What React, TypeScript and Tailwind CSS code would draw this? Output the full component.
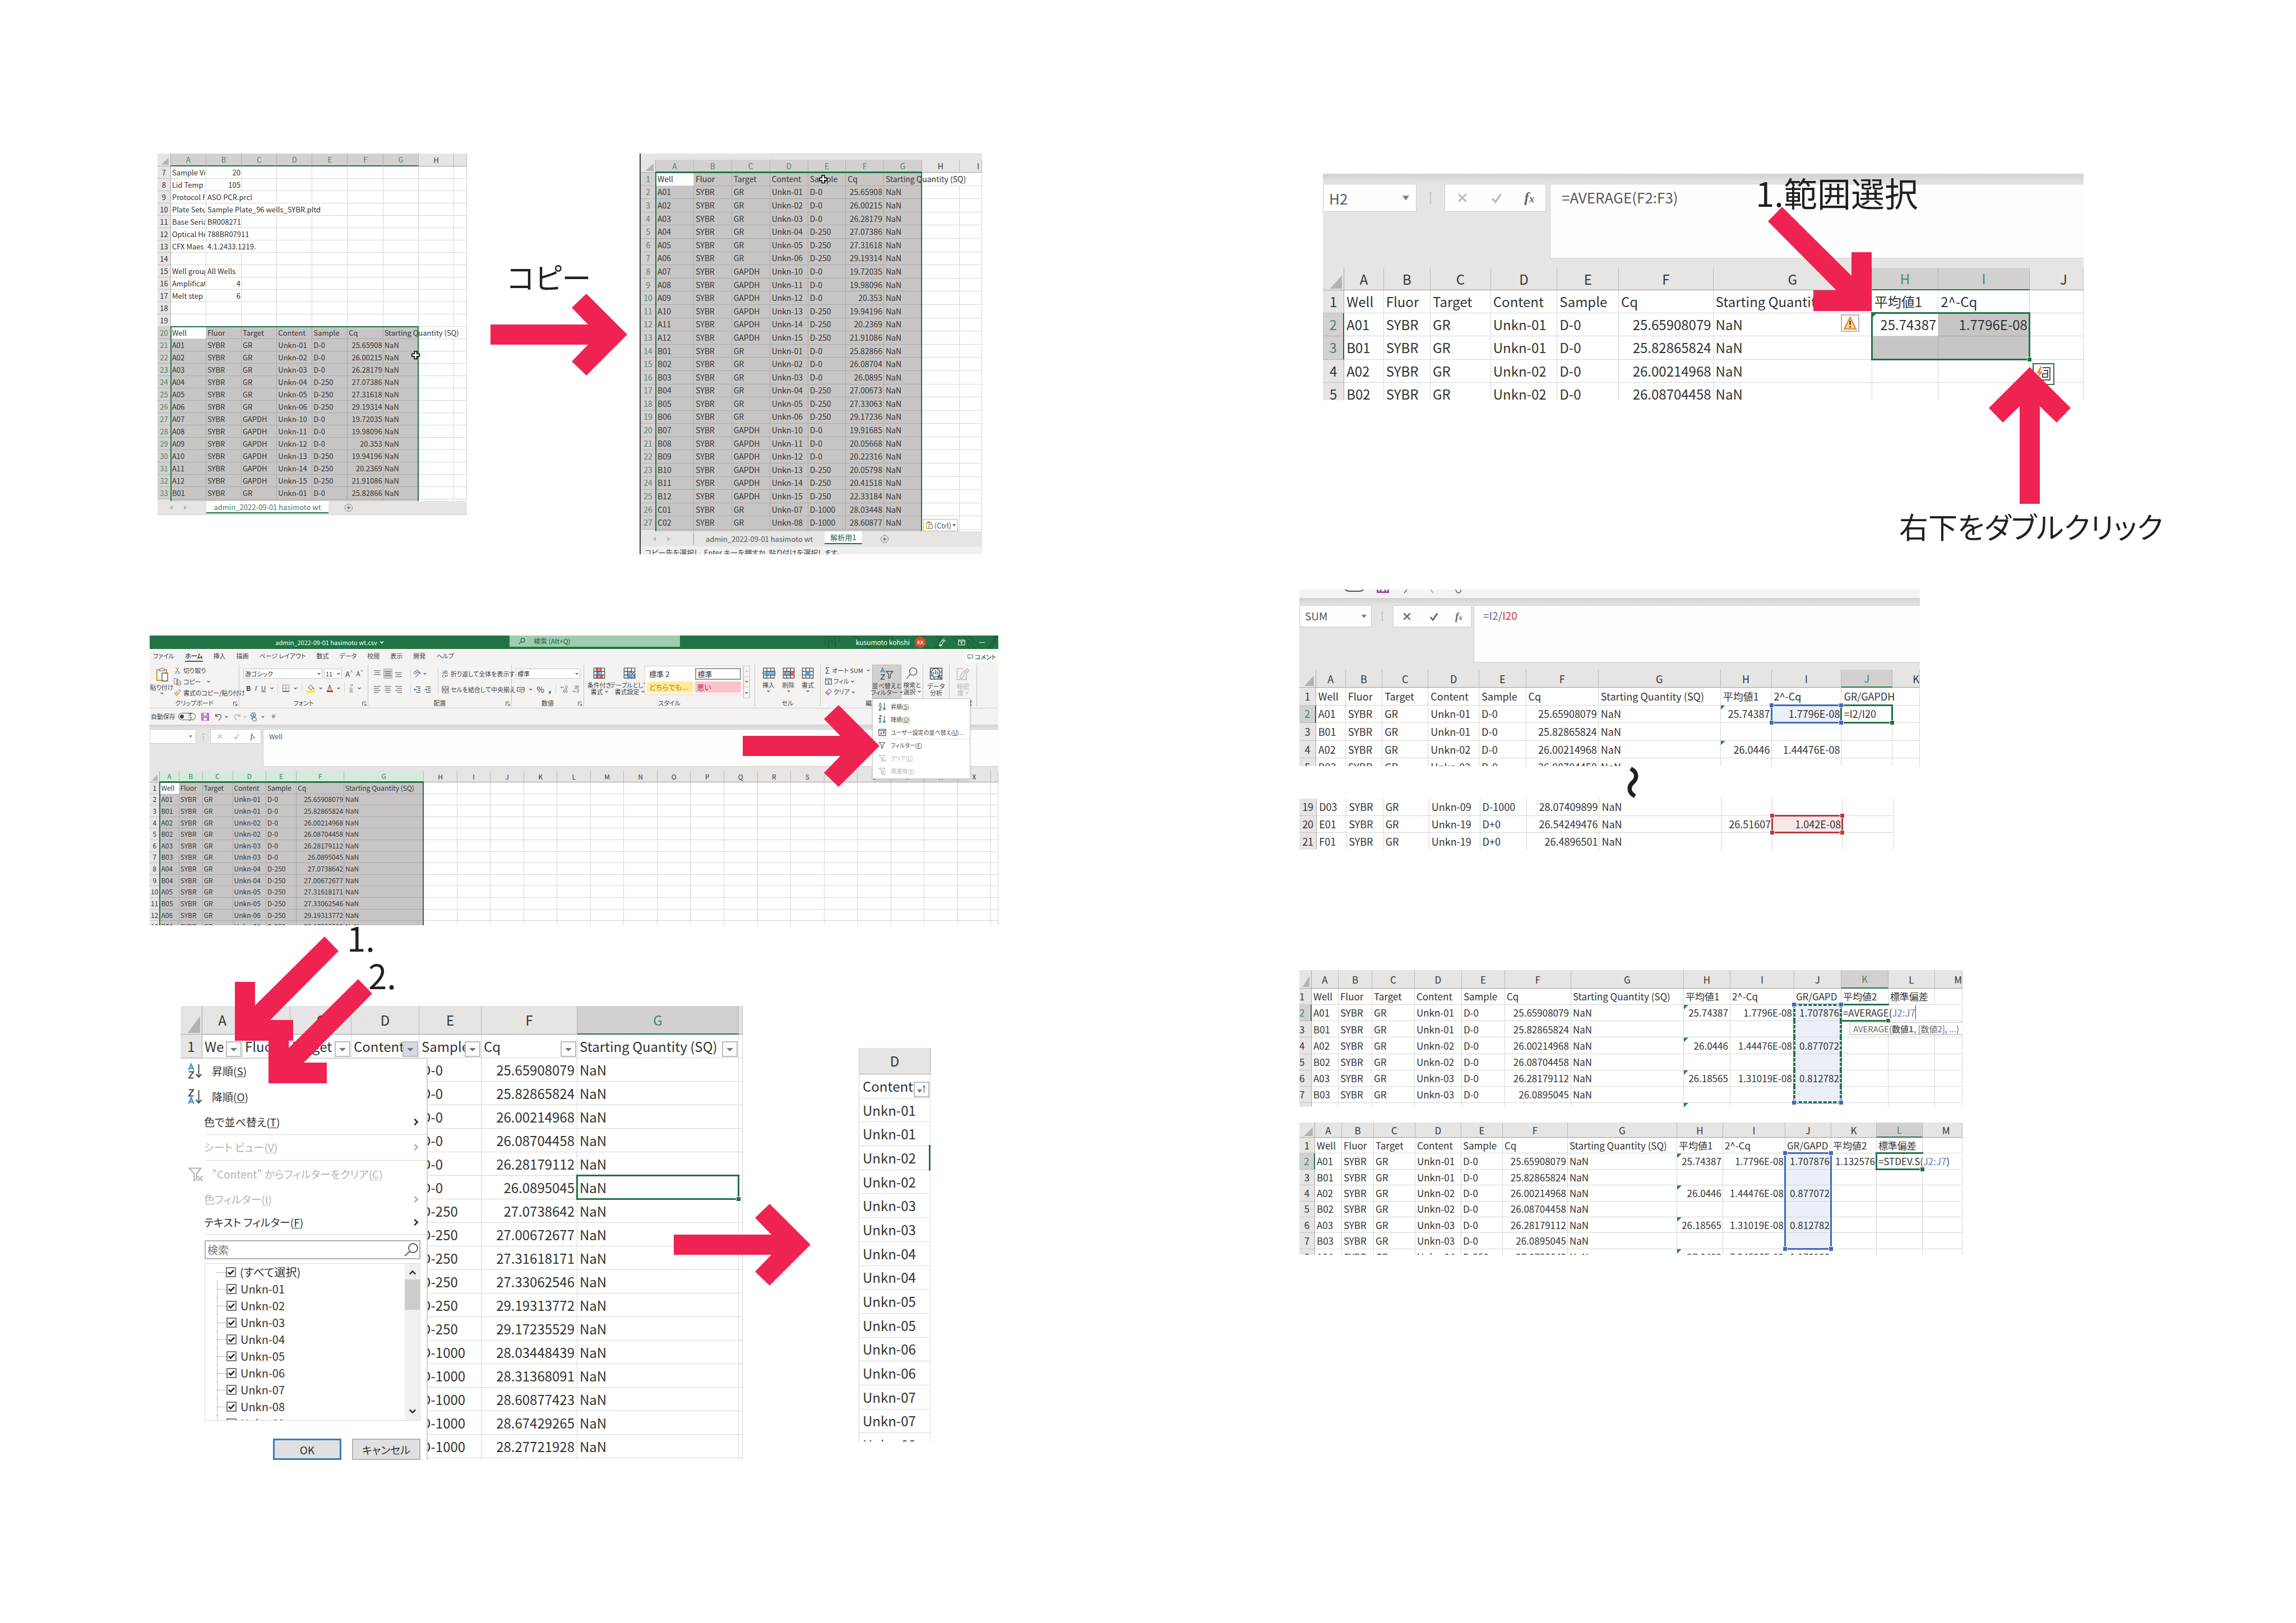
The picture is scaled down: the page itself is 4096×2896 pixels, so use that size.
import type { ReactNode } from 'react';
import clsx from 'clsx';
import { twMerge } from 'tailwind-merge';

/* ---------- shared pieces ---------- */

type CellSpec = { text?: ReactNode; spill?: number; className?: string; extra?: ReactNode };
type Cell = string | CellSpec;
type Row = { n: string; cells: Cell[] };
type Column = [label: string, weight: number, headClass?: string];
type Range = {
  from: [number, number];
  to: [number, number];
  edge?: string;
  thin?: boolean;
  fill?: string;
  handle?: string;
  corners?: boolean;
  skip?: [number, number];
};

const GREEN = 'border-[#217346]';

function Triangle() {
  return (
    <span className="absolute bottom-[2px] right-[3px] h-[60%] w-[58%] bg-[#b4b3b2] [clip-path:polygon(100%_0,100%_100%,0_100%)]" />
  );
}

const hasText = (cell?: Cell) => (typeof cell === 'string' ? cell !== '' : Boolean(cell?.text || cell?.extra));

function Sheet({
  corner,
  cols,
  rows,
  box,
  table,
  head,
  text,
  pad,
  activeCols = [],
  activeRows = [],
  activeHead = 'bg-[#d2d1d0] text-[#4c8467]',
  rowHead = 'text-center',
  rowMark = false,
  ranges = [],
  noHead = false,
}: {
  corner: number;
  cols: Column[];
  rows: Row[];
  box: string;
  table: string;
  head?: string;
  text: string;
  pad: string;
  activeCols?: string[];
  activeRows?: string[];
  activeHead?: string;
  rowHead?: string;
  rowMark?: boolean;
  ranges?: Range[];
  noHead?: boolean;
}) {
  const total = cols.reduce((sum, c) => sum + c[1], corner);
  const share = (w: number) => ({ width: `${(w / total) * 100}%` });
  return (
    <div className={clsx('isolate overflow-hidden bg-white', box)}>
      <table className={clsx('w-full table-fixed border-separate border-spacing-0 leading-none text-[#333]', table, text)}>
        <colgroup>
          <col style={share(corner)} />
          {cols.map((c, i) => (
            <col key={i} style={share(c[1])} />
          ))}
        </colgroup>
        {!noHead && (
          <thead>
            <tr className={head}>
              <th className="relative border-b border-r border-[#a8a7a6] bg-[#e6e5e4]">
                <Triangle />
              </th>
              {cols.map(([label, , headClass], i) => {
                const on = activeCols.includes(label);
                return (
                  <th
                    key={i}
                    scope="col"
                    className={clsx(
                      'border-b border-r p-0 font-normal',
                      headClass,
                      on ? clsx(activeHead, 'border-r-[#b4b3b2] border-b-2 border-b-[#217346]') : 'border-b-[#9c9b9a] border-r-[#b9b8b7] bg-[#e6e5e4]',
                    )}
                  >
                    {label}
                  </th>
                );
              })}
            </tr>
          </thead>
        )}
        <tbody>
          {rows.map((row, r) => {
            const open = new Set<number>();
            row.cells.forEach((c, i) => {
              if (typeof c !== 'string' && c.spill) for (let k = 0; k < c.spill; k++) open.add(i + k);
            });
            const on = activeRows.includes(row.n);
            return (
              <tr key={row.n}>
                <th
                  scope="row"
                  className={clsx(
                    'border-b border-r p-0 font-normal',
                    rowHead,
                    on ? clsx(activeHead, 'border-b-[#b4b3b2]') : 'border-b-[#c4c3c2] bg-[#e6e5e4]',
                    on && rowMark ? 'border-r-2 border-r-[#217346]' : 'border-r-[#a8a7a6]',
                  )}
                >
                  <div className="leading-normal">{row.n || '\u00a0'}</div>
                </th>
                {cols.map((_, c) => {
                  const raw = row.cells[c] ?? '';
                  const cell: CellSpec = typeof raw === 'string' ? { text: raw } : raw;
                  const hits = ranges.filter((g) => c >= g.from[0] && c <= g.to[0] && r >= g.from[1] && r <= g.to[1]);
                  const fill = hits.find((g) => g.fill && !(g.skip && g.skip[0] === c && g.skip[1] === r));
                  const right = typeof cell.text === 'string' && /^\d+(\.\d+)?(E-\d+)?$/.test(cell.text);
                  const clip = !right && !cell.spill && (hasText(row.cells[c + 1]) || Boolean(cell.extra));
                  return (
                    <td
                      key={c}
                      className={clsx(
                        'relative border-b border-r py-0',
                        pad,
                        fill ? fill.fill : 'border-[#d6d6d6]',
                        open.has(c) && 'border-r-transparent',
                        right ? 'text-right' : 'text-left',
                        cell.className,
                      )}
                    >
                      {cell.text && (
                        <div
                          className={clsx(
                            'whitespace-nowrap leading-normal',
                            cell.spill && 'relative z-[5]',
                            clip && 'overflow-x-clip',
                            right && 'flex justify-end',
                          )}
                        >
                          {cell.text}
                        </div>
                      )}
                      {cell.extra}
                      {hits
                        .filter((g) => g.edge)
                        .map((g, k) => (
                          <span
                            key={k}
                            className={twMerge(
                              'pointer-events-none absolute -inset-[2px] z-10',
                              g.thin && '-inset-px',
                              r === g.from[1] && (g.thin ? 'border-t-2' : 'border-t-[3px]'),
                              r === g.to[1] && (g.thin ? 'border-b-2' : 'border-b-[3px]'),
                              c === g.from[0] && (g.thin ? 'border-l-2' : 'border-l-[3px]'),
                              c === g.to[0] && (g.thin ? 'border-r-2' : 'border-r-[3px]'),
                              g.edge,
                            )}
                          />
                        ))}
                      {hits
                        .filter((g) => g.handle)
                        .map((g, k) => {
                          const T = r === g.from[1];
                          const B = r === g.to[1];
                          const L = c === g.from[0];
                          const R = c === g.to[0];
                          const base = clsx('absolute z-20 size-[9px] border border-white', g.handle);
                          return (
                            <span key={k}>
                              {g.corners && T && L && <i className={clsx(base, '-left-[5px] -top-[5px]')} />}
                              {g.corners && T && R && <i className={clsx(base, '-right-[5px] -top-[5px]')} />}
                              {g.corners && B && L && <i className={clsx(base, '-bottom-[5px] -left-[5px]')} />}
                              {B && R && <i className={clsx(base, '-bottom-[5px] -right-[5px]')} />}
                            </span>
                          );
                        })}
                    </td>
                  );
                })}
              </tr>
            );
          })}
        </tbody>
      </table>
    </div>
  );
}

function Arrow({ className, up = false }: { className?: string; up?: boolean }) {
  return up ? (
    <svg viewBox="0 0 146 244" className={clsx('h-[244px] w-[146px] fill-[#ef2352]', className)} aria-hidden="true">
      <polygon points="55,244 55,70 25,99 0,73 73,0 146,73 121,99 91,70 91,244" />
    </svg>
  ) : (
    <svg viewBox="0 0 244 146" className={clsx('h-[146px] w-[244px] fill-[#ef2352]', className)} aria-hidden="true">
      <polygon points="0,55 174,55 145,25 171,0 244,73 171,146 145,121 174,91 0,91" />
    </svg>
  );
}

function DiagonalArrow({ className, left = false }: { className?: string; left?: boolean }) {
  return (
    <svg viewBox="0 0 185 186" className={clsx('h-[186px] w-[185px] fill-[#ef2352]', className)} aria-hidden="true">
      {left ? (
        <polygon points="160,0 185,26 63,149 104,149 104,186 0,186 0,81 36,81 36,123" />
      ) : (
        <polygon points="25,0 0,26 122,149 81,149 81,186 185,186 185,81 149,81 149,123" />
      )}
    </svg>
  );
}

function Note({ children, className, small = false }: { children: ReactNode; className?: string; small?: boolean }) {
  return (
    <p className={clsx('whitespace-nowrap leading-[60px] text-[#231f20]', small ? 'text-[52px]' : 'text-[60px]', className)}>{children}</p>
  );
}

function Chevron({ className = 'size-[6px]' }: { className?: string }) {
  return (
    <svg viewBox="0 0 8 8" className={clsx('shrink-0 fill-none stroke-current', className)} strokeWidth="1.6" aria-hidden="true">
      <path d="M1 2.5 4 5.5 7 2.5" />
    </svg>
  );
}

function Cross({ className }: { className?: string }) {
  return (
    <svg viewBox="0 0 20 20" className={clsx('absolute z-20 size-[18px]', className)} aria-hidden="true">
      <path d="M7 2h5v5h5v5h-5v5H7v-5H2V7h5z" fill="#fff" stroke="#111" strokeWidth="2" />
    </svg>
  );
}

function ErrorFlag() {
  return <span className="absolute left-0 top-0 size-[8px] bg-[#1d8745] [clip-path:polygon(0_0,100%_0,0_100%)]" />;
}

function PlusTab() {
  return (
    <button type="button" aria-label="新しいシート" className="flex items-center">
      <svg viewBox="0 0 16 16" className="size-[16px] fill-none stroke-[#777]" aria-hidden="true">
        <circle cx="8" cy="8" r="6.5" />
        <path d="M8 5v6M5 8h6" strokeWidth="1.8" />
      </svg>
    </button>
  );
}

function TabArrows() {
  return (
    <div className="flex w-[87px] shrink-0 items-center gap-[20px] pl-[21px]">
      <button type="button" aria-label="前のシート">
        <svg viewBox="0 0 6 8" className="h-[8px] w-[6px] fill-[#b9b8b7]" aria-hidden="true"><path d="M6 0v8L0 4z" /></svg>
      </button>
      <button type="button" aria-label="次のシート">
        <svg viewBox="0 0 6 8" className="h-[8px] w-[6px] fill-[#b9b8b7]" aria-hidden="true"><path d="M0 0v8l6-4z" /></svg>
      </button>
    </div>
  );
}

/* ---------- formula bar ---------- */

function FormulaBar({
  name,
  children,
  size,
  muted = true,
}: {
  name: string;
  children: ReactNode;
  size: 'sm' | 'md' | 'lg';
  muted?: boolean;
}) {
  const s = {
    sm: { root: 'text-[12px]', name: 'h-[26px] w-[83px] pl-[6px] pr-[6px]', gap: 'w-[25px]', dots: 'mt-[8px] h-[11px]', btn: 'h-[26px] w-[91px] px-[10px]', ico: 'size-[12px]', caret: 'size-[6px]', box: 'ml-[3px] h-[67px]' },
    md: { root: 'text-[19px]', name: 'h-[39px] w-[129px] pl-[9px] pr-[8px]', gap: 'w-[38px]', dots: 'mt-[12px] h-[16px]', btn: 'h-[39px] w-[140px] px-[15px]', ico: 'size-[18px]', caret: 'size-[9px]', box: 'ml-[4px] h-[102px]' },
    lg: { root: 'text-[26px]', name: 'h-[50px] w-[167px] pl-[10px] pr-[12px]', gap: 'w-[50px]', dots: 'mt-[15px] h-[20px]', btn: 'h-[50px] w-[181px] px-[20px]', ico: 'size-[22px]', caret: 'size-[12px]', box: 'ml-[7px] h-[133px]' },
  }[size];
  const tone = muted ? 'stroke-[#bdbcbb]' : 'stroke-[#6a6a6a]';
  return (
    <div className={clsx('flex items-start bg-[#e6e5e4] leading-none text-[#5a5a5a]', s.root)}>
      <div className={clsx('flex shrink-0 items-center border border-[#cfcecd] bg-[#fefefd]', s.name)}>
        <input aria-label="名前ボックス" readOnly value={name} className="min-w-0 flex-1 bg-transparent leading-normal outline-none" />
        <button type="button" aria-label="名前の一覧">
          <svg viewBox="0 0 8 8" className={clsx('fill-[#7d7d7d]', s.caret)} aria-hidden="true"><path d="M0 1.5h8L4 7z" /></svg>
        </button>
      </div>
      <div className={clsx('flex shrink-0 items-start justify-center self-stretch', s.gap)}>
        <span className={clsx('border-l-2 border-dotted border-[#b0afae]', s.dots)} />
      </div>
      <div className={clsx('flex shrink-0 items-center justify-between border border-[#cfcecd] bg-[#fefefd]', s.btn)}>
        <button type="button" aria-label="キャンセル">
          <svg viewBox="0 0 16 16" className={clsx('fill-none', tone, s.ico)} strokeWidth="2.2" aria-hidden="true"><path d="M3 3l10 10M13 3L3 13" /></svg>
        </button>
        <button type="button" aria-label="入力">
          <svg viewBox="0 0 16 16" className={clsx('fill-none', tone, s.ico)} strokeWidth="2.6" aria-hidden="true"><path d="M2.5 9l4 4.5L13.5 3" /></svg>
        </button>
        <button type="button" aria-label="関数の挿入" className="font-['Liberation_Serif',serif] font-bold italic text-[#666]">
          f<span className="text-[0.7em]">x</span>
        </button>
      </div>
      <div className={clsx('min-w-0 flex-1 border border-r-0 border-[#cfcecd] bg-[#fefefd]', s.box)}>{children}</div>
    </div>
  );
}

/* ---------- ribbon icons ---------- */

function Ico({ children, className }: { children: ReactNode; className?: string }) {
  return (
    <svg viewBox="0 0 16 16" className={twMerge('size-[14px] shrink-0 fill-none stroke-[#555]', className)} aria-hidden="true">
      {children}
    </svg>
  );
}

const GridLines = () => <path d="M1 1.5h14v13H1zM1 6h14M1 10.5h14M5.5 1.5v13M10.5 1.5v13" />;

function Funnel({ mark }: { mark?: 'x' | 'r' }) {
  return (
    <>
      <path d="M1.5 2h12L9 7.5V13l-2.5 1.5v-7z" strokeWidth="1.2" />
      {mark === 'x' && <path d="M10 10l5 5M15 10l-5 5" strokeWidth="1.2" />}
      {mark === 'r' && <path d="M15 11a2.6 2.6 0 0 0-5 .5M10 14a2.6 2.6 0 0 0 5-.5M15 9v2.2h-2M10 16v-2.2h2" strokeWidth="1" />}
    </>
  );
}

function SortIcon({ desc = false, className }: { desc?: boolean; className: string }) {
  return (
    <svg viewBox="0 0 26 28" className={clsx('shrink-0 fill-none', className)} aria-hidden="true">
      <path d="M1.5 12.5 6 1.5l4.5 11M3.2 9h5.6" strokeWidth="2.4" stroke="#3b96d8" transform={desc ? 'translate(0 14)' : undefined} />
      <path d="M2 15.5h8L2 26.5h8.5" strokeWidth="2.2" stroke="#4a4a4a" transform={desc ? 'translate(0 -14)' : undefined} />
      <path d="M19.5 2v23M14.5 19.5l5 5.5 5-5.5" strokeWidth="2" stroke="#4a4a4a" />
    </svg>
  );
}

function Group({ label, children, launcher = false }: { label: string; children: ReactNode; launcher?: boolean }) {
  return (
    <div className="relative flex min-w-0 flex-col border-r border-[#c8c6c4]">
      <div className="h-[62px]">{children}</div>
      <div className="flex h-[12px] items-center justify-center">{label}</div>
      {launcher && (
        <button type="button" aria-label={`${label}の設定`} className="absolute bottom-0 right-[2px]">
          <Ico className="size-[8px]">
            <path d="M1 14V1h13M5 5l9 9M14 7v7H7" strokeWidth="2" />
          </Ico>
        </button>
      )}
    </div>
  );
}

function BigButton({ icon, lines, chevron = 'none', className }: { icon: ReactNode; lines: string[]; chevron?: 'none' | 'below' | 'beside'; className?: string }) {
  return (
    <button type="button" className={clsx('flex h-[60px] shrink-0 flex-col items-center whitespace-nowrap pt-[4px]', className)}>
      {icon}
      <span className="mt-[4px] leading-[12px]">{lines[0]}</span>
      {lines[1] && (
        <span className="flex items-center gap-[3px] leading-[12px]">
          {lines[1]}
          {chevron === 'beside' && <Chevron />}
        </span>
      )}
      {chevron === 'below' && <Chevron className="mt-[2px] size-[6px]" />}
    </button>
  );
}

function Combo({ label, value, className }: { label: string; value: string; className: string }) {
  return (
    <span className={clsx('relative flex h-[18px] items-center border border-[#c8c6c4] bg-white text-[#333]', className)}>
      <select aria-label={label} defaultValue={value} className="w-full appearance-none bg-transparent pl-[2px] leading-[16px] outline-none">
        <option>{value}</option>
      </select>
      <Chevron className="absolute right-[2px] size-[6px]" />
    </span>
  );
}

const Bar = () => <span className="h-[17px] w-px shrink-0 bg-[#d2d0ce]" />;

const lines = (a: number, b: number, c: number) => (
  <path d={`M1 ${a}h14M3 ${b}h10M1 ${c}h14`} strokeWidth="1.4" />
);

function IconButton({ label, children, className }: { label: string; children: ReactNode; className?: string }) {
  return (
    <button type="button" aria-label={label} className={clsx('flex items-center', className)}>
      {children}
    </button>
  );
}

function Ribbon() {
  return (
    <div className="grid h-[78px] grid-cols-[160fr_230fr_256fr_129fr_305fr_117fr_183fr_47fr_49fr_38fr] border-b border-[#cfcecd] bg-[#f4f3f2] pb-[4px] text-[11px] leading-none text-[#444]">
      <Group label="クリップボード" launcher>
        <div className="flex">
          <BigButton
            className="w-[43px]"
            icon={
              <svg viewBox="0 0 24 26" className="h-[26px] w-[24px] shrink-0 fill-none" aria-hidden="true">
                <path d="M3 5h17v19H3z" stroke="#e8912d" strokeWidth="2" fill="#f9f8f7" />
                <path d="M7 7V4h3c0-3 4-3 4 0h3v3z" stroke="#666" fill="#f4f3f2" />
                <path d="M12 11h10v14H12z" stroke="#555" fill="#fff" strokeWidth="1.3" />
              </svg>
            }
            lines={['貼り付け']}
            chevron="below"
          />
          <div className="flex flex-col">
            <button type="button" className="flex h-[20px] items-center gap-[4px]">
              <Ico className="size-[13px]">
                <path d="M5 1l5 10M11 1L6 11" />
                <circle cx="4.5" cy="13" r="2" stroke="#3b7fc4" />
                <circle cx="11.5" cy="13" r="2" stroke="#3b7fc4" />
              </Ico>
              切り取り
            </button>
            <button type="button" className="flex h-[20px] items-center gap-[4px]">
              <Ico className="size-[13px]">
                <path d="M1 1h7v12H1zM6 4h5l4 3v8H6zM8 9h5M8 12h5" fill="#f9f8f7" />
              </Ico>
              コピー
              <Chevron className="ml-[6px] size-[6px]" />
            </button>
            <button type="button" className="flex h-[20px] items-center gap-[4px] whitespace-nowrap">
              <Ico className="size-[13px]">
                <path d="M1 8l6-3 4 5-5 5z" fill="#f8c27a" stroke="#e8912d" />
                <path d="M8 5l5-4 2 3-4 5" />
              </Ico>
              書式のコピー/貼り付け
            </button>
          </div>
        </div>
      </Group>

      <Group label="フォント" launcher>
        <div className="flex flex-col gap-[8px] pl-[7px] pt-[7px]">
          <div className="flex items-center gap-[3px]">
            <Combo label="フォント名" value="游ゴシック" className="w-[141px]" />
            <Combo label="フォント サイズ" value="11" className="w-[32px]" />
            <button type="button" className="ml-[3px] text-[13px]">A<sup className="text-[#3b7fc4]">^</sup></button>
            <button type="button" className="ml-[3px] text-[12px]">A<sup className="text-[#3b7fc4]">ˇ</sup></button>
          </div>
          <div className="flex items-center justify-between pl-[5px] pr-[12px] text-[12px]">
            <button type="button" className="font-bold">B</button>
            <button type="button" className="font-['Liberation_Serif',serif] italic">I</button>
            <button type="button" className="underline">U</button>
            <Chevron />
            <Bar />
            <IconButton label="罫線"><Ico><path d="M1.5 1.5h13M1.5 8h13M1.5 1.5v13M8 1.5v13M14.5 1.5v13" strokeDasharray="1.5 1" /><path d="M1 14.5h14" strokeWidth="2" /></Ico></IconButton>
            <Chevron />
            <Bar />
            <IconButton label="塗りつぶしの色"><Ico className="size-[16px]"><path d="M4 7l4-5 5 5-4 4zM13 7l1 3" stroke="#555" /><path d="M0 14h16" stroke="#f8e71c" strokeWidth="3.5" /></Ico></IconButton>
            <Chevron />
            <IconButton label="フォントの色"><span className="border-b-[3px] border-[#e8242a] px-[2px] leading-[12px]">A</span></IconButton>
            <Chevron />
            <Bar />
            <button type="button" className="flex flex-col text-[8px] leading-[8px] text-[#888]"><span>ア</span><span>亜</span></button>
            <Chevron />
          </div>
        </div>
      </Group>

      <Group label="配置" launcher>
        <div className="grid grid-cols-[66px_49px_1fr] pl-[9px] pt-[7px]">
          <div className="flex flex-col gap-[10px]">
            <div className="flex h-[18px] items-center gap-[5px]">
              <IconButton label="上揃え"><Ico>{lines(2, 6, 10)}</Ico></IconButton>
              <IconButton label="上下中央揃え" className="-mx-[1px] border border-[#b4b2b0] bg-[#d2d0ce] py-px"><Ico>{lines(4, 8, 12)}</Ico></IconButton>
              <IconButton label="下揃え"><Ico>{lines(6, 10, 14)}</Ico></IconButton>
            </div>
            <div className="flex h-[18px] items-center gap-[5px]">
              <IconButton label="左揃え"><Ico><path d="M1 2h14M1 6h10M1 10h14M1 14h10" strokeWidth="1.4" /></Ico></IconButton>
              <IconButton label="中央揃え"><Ico><path d="M1 2h14M3 6h10M1 10h14M3 14h10" strokeWidth="1.4" /></Ico></IconButton>
              <IconButton label="右揃え"><Ico><path d="M1 2h14M5 6h10M1 10h14M5 14h10" strokeWidth="1.4" /></Ico></IconButton>
            </div>
          </div>
          <div className="flex flex-col gap-[10px]">
            <div className="flex h-[18px] items-center gap-[4px]">
              <Bar />
              <IconButton label="方向"><Ico><circle cx="4" cy="6" r="2.5" /><circle cx="8" cy="3" r="2.5" /><path d="M5 15L14 5M10 5h4v4" stroke="#3b7fc4" strokeWidth="1.4" /></Ico></IconButton>
              <Chevron />
            </div>
            <div className="flex h-[18px] items-center gap-[5px]">
              <Bar />
              <IconButton label="インデントを減らす"><Ico className="size-[13px]"><path d="M5 2h10M9 6h6M9 10h6M5 14h10" strokeWidth="1.4" /><path d="M7 8H1M3.5 5.5L1 8l2.5 2.5" stroke="#3b7fc4" strokeWidth="1.5" /></Ico></IconButton>
              <IconButton label="インデントを増やす"><Ico className="size-[13px]"><path d="M5 2h10M9 6h6M9 10h6M5 14h10" strokeWidth="1.4" /><path d="M1 8h6M4.5 5.5L7 8l-2.5 2.5" stroke="#3b7fc4" strokeWidth="1.5" /></Ico></IconButton>
            </div>
          </div>
          <div className="flex flex-col gap-[10px] border-l border-[#d2d0ce] pl-[6px]">
            <button type="button" className="flex h-[18px] items-center gap-[4px] whitespace-nowrap">
              <span className="flex w-[12px] flex-col text-[8px] leading-[7px]"><span>ab</span><span>c<b className="text-[#3b7fc4]">↵</b></span></span>
              折り返して全体を表示する
            </button>
            <button type="button" className="flex h-[18px] items-center gap-[3px] whitespace-nowrap">
              <Ico className="size-[13px]"><path d="M1 1h14v14H1zM1 5h14M1 11h14M8 1v4M8 11v4" /><path d="M3 8h10M5 6L3 8l2 2M11 6l2 2-2 2" stroke="#3b7fc4" strokeWidth="1.4" /></Ico>
              セルを結合して中央揃え
              <Chevron className="ml-[6px] size-[6px]" />
            </button>
          </div>
        </div>
      </Group>

      <Group label="数値" launcher>
        <div className="flex flex-col gap-[10px] pl-[7px] pr-[6px] pt-[7px]">
          <Combo label="表示形式" value="標準" className="w-full" />
          <div className="flex items-center justify-between px-[2px]">
            <IconButton label="通貨表示形式"><Ico><path d="M1 4h14v8H1z" strokeWidth="1.4" /><path d="M5 6.5v3M8 6.5v3" /><path d="M9 8h5v7H9zM9 11h5" stroke="#e8912d" strokeWidth="1.5" fill="#fff" /></Ico></IconButton>
            <Chevron />
            <button type="button" className="text-[15px]">%</button>
            <button type="button" className="font-['Liberation_Serif',serif] text-[18px] font-bold leading-[8px]">,</button>
            <Bar />
            <button type="button" className="flex flex-col text-right text-[7px] leading-[7px]"><span><b className="text-[#3b7fc4]">←</b>.0</span><span>.00</span></button>
            <button type="button" className="flex flex-col text-right text-[7px] leading-[7px]"><span>.00</span><span><b className="text-[#3b7fc4]">→</b>.0</span></button>
          </div>
        </div>
      </Group>

      <Group label="スタイル">
        <div className="flex">
          <BigButton
            className="w-[50px] pl-[4px]"
            icon={
              <Ico className="h-[22px] w-[24px]">
                <path d="M4 1.5h6v4H4zM4 10.5h8v4H4z" fill="#f48b90" stroke="#e2474e" />
                <path d="M4 6h5v4.5H4z" fill="#6aaee6" stroke="none" />
                <GridLines />
              </Ico>
            }
            lines={['条件付き', '書式']}
            chevron="beside"
          />
          <BigButton
            className="w-[56px] pl-[6px]"
            icon={
              <Ico className="h-[22px] w-[24px]">
                <path d="M5.5 6h10v8.5h-10z" fill="#7fbaea" stroke="none" />
                <GridLines />
                <path d="M15.5 5L9 12l-3 3.5" stroke="#fff" strokeWidth="3" />
                <path d="M15.5 5L9 12" strokeWidth="1.5" />
                <path d="M8.5 11.5c-2 0-3 3.5-4.5 3.5 3 1.5 6 0 5.5-2.5z" fill="#3b96d8" stroke="none" />
              </Ico>
            }
            lines={['テーブルとして', '書式設定']}
            chevron="beside"
          />
          <div className="mt-[2px] flex flex-1 pl-[2px] pr-[8px]">
            <div className="grid h-[52px] flex-1 grid-cols-2 grid-rows-2 gap-[3px] border border-[#d2d0ce] bg-white p-[3px] text-[13px] text-[#333]">
              <button type="button" className="pl-[4px] text-left">標準 2</button>
              <button type="button" className="border-2 border-[#9a9998] pl-[3px] text-left">標準</button>
              <button type="button" className="bg-[#ffeb9c] pl-[4px] text-left text-[#b07d22]">どちらでも...</button>
              <button type="button" className="bg-[#fbc4cd] pl-[4px] text-left text-[#b3303a]">悪い</button>
            </div>
            <div className="grid w-[12px] grid-rows-3 border border-[#c8c6c4]">
              <IconButton label="前のスタイル" className="justify-center border-b border-[#c8c6c4] text-[#bbb]"><Chevron className="size-[6px] rotate-180" /></IconButton>
              <IconButton label="次のスタイル" className="justify-center border-b border-[#c8c6c4]"><Chevron /></IconButton>
              <IconButton label="スタイル一覧" className="justify-center"><Chevron /></IconButton>
            </div>
          </div>
        </div>
      </Group>

      <Group label="セル">
        <div className="flex pl-[6px]">
          <BigButton className="w-[36px]" icon={<Ico className="h-[22px] w-[25px]"><GridLines /><path d="M5 6h11v4.5H5z" fill="#7fbaea" /><path d="M6 8.2H0M3 5.5L0 8.2 3 11" stroke="#3b96d8" strokeWidth="1.3" /></Ico>} lines={['挿入']} chevron="below" />
          <BigButton className="w-[35px]" icon={<Ico className="h-[22px] w-[24px]"><GridLines /><path d="M3 6h7v4.5H3z" fill="#7fbaea" /><path d="M9 5l7 7M16 5l-7 7" stroke="#e8463c" strokeWidth="1.4" /></Ico>} lines={['削除']} chevron="below" />
          <BigButton className="w-[34px]" icon={<Ico className="h-[22px] w-[22px]"><GridLines /><path d="M5 6h6v4.5H5z" fill="#4f9fe0" stroke="none" /></Ico>} lines={['書式']} chevron="below" />
        </div>
      </Group>

      <Group label="編集">
        <div className="flex">
          <div className="flex w-[92px] shrink-0 flex-col pl-[8px]">
            <button type="button" className="flex h-[20px] items-center gap-[4px] whitespace-nowrap"><span className="text-[14px]">Σ</span>オート SUM<Chevron className="ml-[2px] size-[6px]" /></button>
            <button type="button" className="flex h-[19px] items-center gap-[3px]"><Ico className="size-[12px]"><path d="M1 1h14v14H1zM1 4h14" strokeWidth="1.5" /><path d="M8 6v7M5.5 10.5L8 13l2.5-2.5" stroke="#3b7fc4" strokeWidth="1.5" /></Ico>フィル<Chevron /></button>
            <button type="button" className="flex h-[19px] items-center gap-[3px]"><Ico className="size-[12px]"><path d="M1 10l8-9 6 5-8 9z" stroke="#9a4fae" strokeWidth="1.5" /><path d="M1 10l3.5-4 6 5L7 15z" fill="#c58ad3" stroke="none" /></Ico>クリア<Chevron /></button>
          </div>
          <BigButton
            className="w-[52px] border border-[#b4b2b0] bg-[#d2d0ce]"
            icon={
              <svg viewBox="0 0 24 22" className="h-[22px] w-[24px] shrink-0 fill-none stroke-[#4a4a4a]" aria-hidden="true">
                <path d="M1 9L4.5 1 8 9M2.3 6.5h4.4" stroke="#2f80c9" strokeWidth="1.4" />
                <path d="M1.5 13h6.5l-6.5 8H8" strokeWidth="1.4" />
                <path d="M11 7h12l-4.5 5v6l-3 1.5V12z" strokeWidth="1.3" />
              </svg>
            }
            lines={['並べ替えと', 'フィルター']}
            chevron="beside"
          />
          <BigButton className="w-[38px]" icon={<Ico className="h-[22px] w-[22px]"><circle cx="9.5" cy="6" r="4.8" /><path d="M6 9.5L1 15" /></Ico>} lines={['検索と', '選択']} chevron="beside" />
        </div>
      </Group>

      <Group label="分析">
        <BigButton className="w-full" icon={<Ico className="h-[24px] w-[24px]"><GridLines /><circle cx="7.5" cy="7" r="5" fill="#fff" /><path d="M5 6v3M7.5 4v5M10 5.5V9" stroke="#3b96d8" strokeWidth="1.6" /><path d="M11 11l4 4" strokeWidth="1.5" /></Ico>} lines={['データ', '分析']} />
      </Group>
      <Group label="秘密度">
        <BigButton className="w-full text-[#b4b3b2]" icon={<Ico className="h-[24px] w-[24px] stroke-[#bdbcbb]"><path d="M1 2h7M1 2v13h11V8M4 12l5-7 2 2-5 7zM11 4l2-2 2 2-2 3z" /></Ico>} lines={['秘密', '度']} chevron="beside" />
      </Group>
      <div />
    </div>
  );
}

/* ---------- figures ---------- */

const wells = (list: string): string[][] => list.trim().split('\n').map((l) => l.trim().split(/\s+/));

const copied = wells(`
A01 SYBR GR Unkn-01 D-0 25.65908 NaN
A02 SYBR GR Unkn-02 D-0 26.00215 NaN
A03 SYBR GR Unkn-03 D-0 26.28179 NaN
A04 SYBR GR Unkn-04 D-250 27.07386 NaN
A05 SYBR GR Unkn-05 D-250 27.31618 NaN
A06 SYBR GR Unkn-06 D-250 29.19314 NaN
A07 SYBR GAPDH Unkn-10 D-0 19.72035 NaN
A08 SYBR GAPDH Unkn-11 D-0 19.98096 NaN
A09 SYBR GAPDH Unkn-12 D-0 20.353 NaN
A10 SYBR GAPDH Unkn-13 D-250 19.94196 NaN
A11 SYBR GAPDH Unkn-14 D-250 20.2369 NaN
A12 SYBR GAPDH Unkn-15 D-250 21.91086 NaN
B01 SYBR GR Unkn-01 D-0 25.82866 NaN
B02 SYBR GR Unkn-02 D-0 26.08704 NaN
B03 SYBR GR Unkn-03 D-0 26.0895 NaN
B04 SYBR GR Unkn-04 D-250 27.00673 NaN
B05 SYBR GR Unkn-05 D-250 27.33063 NaN
B06 SYBR GR Unkn-06 D-250 29.17236 NaN
B07 SYBR GAPDH Unkn-10 D-0 19.91685 NaN
B08 SYBR GAPDH Unkn-11 D-0 20.05668 NaN
B09 SYBR GAPDH Unkn-12 D-0 20.22316 NaN
B10 SYBR GAPDH Unkn-13 D-250 20.05798 NaN
B11 SYBR GAPDH Unkn-14 D-250 20.41518 NaN
B12 SYBR GAPDH Unkn-15 D-250 22.33184 NaN
C01 SYBR GR Unkn-07 D-1000 28.03448 NaN
C02 SYBR GR Unkn-08 D-1000 28.60877 NaN`);

const sorted = wells(`
A01 SYBR GR Unkn-01 D-0 25.65908079 NaN
B01 SYBR GR Unkn-01 D-0 25.82865824 NaN
A02 SYBR GR Unkn-02 D-0 26.00214968 NaN
B02 SYBR GR Unkn-02 D-0 26.08704458 NaN
A03 SYBR GR Unkn-03 D-0 26.28179112 NaN
B03 SYBR GR Unkn-03 D-0 26.0895045 NaN
A04 SYBR GR Unkn-04 D-250 27.0738642 NaN
B04 SYBR GR Unkn-04 D-250 27.00672677 NaN
A05 SYBR GR Unkn-05 D-250 27.31618171 NaN
B05 SYBR GR Unkn-05 D-250 27.33062546 NaN
A06 SYBR GR Unkn-06 D-250 29.19313772 NaN
B06 SYBR GR Unkn-06 D-250 29.17235529 NaN
C01 SYBR GR Unkn-07 D-1000 28.03448439 NaN
D01 SYBR GR Unkn-07 D-1000 28.31368091 NaN
C02 SYBR GR Unkn-08 D-1000 28.60877423 NaN
D02 SYBR GR Unkn-08 D-1000 28.67429265 NaN
C03 SYBR GR Unkn-09 D-1000 28.27721928 NaN`);

const fields: Cell[] = ['Well', 'Fluor', 'Target', 'Content', 'Sample', 'Cq'];
const greyFill = 'bg-[#c8c6c5] border-[#acaaa9]';
const toRows = (data: Cell[][], first: number): Row[] => data.map((cells, i) => ({ n: String(first + i), cells }));

function SourceSheet() {
  const rows = toRows(
    [
      ['Sample Vo', '20'],
      ['Lid Temp', '105'],
      ['Protocol F', { text: 'ASO PCR.prcl', spill: 1 }],
      ['Plate Setu', { text: 'Sample Plate_96 wells_SYBR.pltd', spill: 3 }],
      ['Base Seria', 'BR008271'],
      ['Optical He', { text: '788BR07911', spill: 1 }],
      ['CFX Maes', { text: '4.1.2433.1219.', spill: 1 }],
      [],
      ['Well group', 'All Wells'],
      ['Amplificat', '4'],
      ['Melt step', '6'],
      [],
      [],
      [...fields, { text: 'Starting Quantity (SQ)', spill: 2 }],
      ...copied.slice(0, 13),
    ],
    7,
  );
  const nums = rows.slice(13).map((r) => r.n);
  rows.push({ n: '', cells: [] });
  return (
    <figure className="relative self-start">
      <Sheet
        corner={65}
        cols={[['A', 171], ['B', 171], ['C', 172], ['D', 171], ['E', 171], ['F', 172], ['G', 172], ['H', 171], ['', 62]]}
        rows={rows}
        box="h-[620px]"
        table="h-[639px]"
        head="h-[23px]"
        text="text-[13px]"
        pad="pl-[2px] pr-px"
        activeCols={['A', 'B', 'C', 'D', 'E', 'F', 'G']}
        activeRows={nums}
        ranges={[{ from: [0, 13], to: [6, 27], edge: GREEN, thin: true, fill: greyFill, skip: [0, 13] }]}
      />
      <div className="flex h-[25px] items-stretch border-b border-[#d6d6d6] bg-[#e6e5e4] text-[13px] leading-none">
        <TabArrows />
        <button type="button" className="mb-[2px] w-[218px] whitespace-nowrap border-b-2 border-[#217346] bg-white text-[#3f7d5c]">
          admin_2022-09-01 hasimoto wt
        </button>
        <span className="flex pl-[28px]"><PlusTab /></span>
      </div>
      <Cross className="left-[452px] top-[351px]" />
    </figure>
  );
}

function PastedSheet() {
  const rows = toRows([[...fields, { text: 'Starting Quantity (SQ)', spill: 2 }], ...copied], 1);
  const nums = rows.map((r) => r.n);
  rows.push({ n: '', cells: [] });
  return (
    <figure className="relative self-start border-l-2 border-[#3a3a3a]">
      <div className="h-[11px] bg-[#e6e5e4]">
        <div className="ml-[38%] h-px bg-[#cfcecd]" />
      </div>
      <Sheet
        corner={66}
        cols={[['A', 166], ['B', 165], ['C', 166], ['D', 166], ['E', 165], ['F', 165], ['G', 165], ['H', 165], ['I', 97, 'pr-[4px] text-right']]}
        rows={rows}
        box="h-[663px]"
        table="h-[684px]"
        head="h-[23px]"
        text="text-[14px]"
        pad="pl-[3px] pr-[2px]"
        activeCols={['A', 'B', 'C', 'D', 'E', 'F', 'G']}
        activeRows={nums}
        ranges={[{ from: [0, 0], to: [6, 27], edge: GREEN, thin: true, fill: greyFill, skip: [0, 0] }]}
      />
      <div className="flex h-[27px] items-stretch bg-[#e6e5e4] text-[13px] leading-none">
        <TabArrows />
        <button type="button" className="my-[3px] ml-[7px] w-[234px] whitespace-nowrap border-l border-[#9c9b9a] text-[#555]">admin_2022-09-01 hasimoto wt</button>
        <button type="button" className="mb-[4px] w-[67px] whitespace-nowrap border-b-2 border-[#217346] bg-white font-medium text-[#3f7d5c]">解析用1</button>
        <span className="flex pl-[32px]"><PlusTab /></span>
      </div>
      <p className="h-[14px] overflow-hidden whitespace-nowrap bg-[#f1f0ef] pl-[7px] pt-[3px] text-[13px] leading-[16px] text-[#444]">
        コピー先を選択し、Enter キーを押すか、貼り付けを選択します。
      </p>
      <Cross className="left-[317px] top-[37px]" />
      <button type="button" className="absolute left-[504px] top-[652px] z-20 flex h-[22px] w-[62px] items-center justify-center gap-[2px] border border-[#b4b2b0] bg-white text-[13px] leading-none text-[#555]">
        <Ico>
          <path d="M2 3h10v12H2z" stroke="#e8912d" strokeWidth="1.5" />
          <path d="M5 4V1h4v3" />
          <path d="M7 7h7v8H7z" fill="#fff" />
        </Ico>
        (Ctrl)
        <svg viewBox="0 0 8 8" className="size-[6px] fill-[#555]" aria-hidden="true"><path d="M0 1.5h8L4 7z" /></svg>
      </button>
    </figure>
  );
}

const sortMenu: { label: string; key: string; tail?: string; icon: ReactNode; off?: boolean }[] = [
  { label: '昇順', key: 'S', icon: <SortIcon className="h-[15px] w-[14px]" /> },
  { label: '降順', key: 'O', icon: <SortIcon desc className="h-[15px] w-[14px]" /> },
  { label: 'ユーザー設定の並べ替え', key: 'U', tail: '...', icon: <Ico><path d="M1 1.5h14v13H1zM1 4h14" strokeWidth="1.4" /><path d="M5.5 6v6M3.5 10l2 2 2-2" stroke="#3b7fc4" strokeWidth="1.4" /><path d="M11 12V6M9 8l2-2 2 2" strokeWidth="1.4" /></Ico> },
  { label: 'フィルター', key: 'F', icon: <Ico><Funnel /></Ico> },
  { label: 'クリア', key: 'C', off: true, icon: <Ico className="stroke-[#b4b3b2]"><Funnel mark="x" /></Ico> },
  { label: '再適用', key: 'Y', off: true, icon: <Ico className="stroke-[#b4b3b2]"><Funnel mark="r" /></Ico> },
];

function ExcelWindow() {
  const letters: Column[] = 'HIJKLMNOPQRSTUVWX'.split('').map((l) => [l, 113] as Column);
  return (
    <figure className="relative mt-[145px]">
      <header className="relative grid h-[24px] grid-cols-[642fr_304fr_568fr] bg-[#227447] text-[11px] leading-none text-white">
        <svg viewBox="0 0 320 24" className="absolute right-0 top-0 h-[24px] w-[320px] stroke-[#1e663e]" aria-hidden="true">
          <path d="M11 0v17M17 0v24M23 0v14M29 0v20M36 0v12M60 0l34 24M112 0v24M118 0v24M124 0v24M130 0v24M236 0l24 24M246 0l24 24M256 0l24 24M266 0l24 24" strokeWidth="3" />
          <circle cx="200" cy="10" r="16" fill="none" strokeWidth="7" />
          <path d="M314 0c0 12-6 20-14 24" fill="none" strokeWidth="8" />
        </svg>
        <div className="relative flex items-center justify-center gap-[4px]">
          admin_2022-09-01 hasimoto wt.csv <Chevron className="size-[8px]" />
        </div>
        <label className="relative mb-[4px] flex items-center gap-[15px] bg-[#a0cdb1] pl-[16px] text-[#1e5c3a]">
          <svg viewBox="0 0 16 16" className="size-[12px] shrink-0 fill-none stroke-current" strokeWidth="1.6" aria-hidden="true"><circle cx="10" cy="6" r="4.5" /><path d="M6.5 9.5L1 15" /></svg>
          <input aria-label="検索" placeholder="検索 (Alt+Q)" className="min-w-0 flex-1 bg-transparent text-[12px] leading-normal outline-none placeholder:text-[#1e5c3a]" />
        </label>
        <div className="relative flex items-center justify-end pr-[24px]">
          <span className="text-[12px]">kusumoto kohshi</span>
          <span className="ml-[9px] flex size-[20px] items-center justify-center rounded-full bg-[#d0502a] text-[9px]">KK</span>
          <Ico className="ml-[21px] stroke-white"><path d="M3 15l2-6 5-6 2 2-3 7zM4 15h5M11 2l2-2M13 4h3M13 6l2 1" strokeWidth="1.2" /></Ico>
          <Ico className="ml-[22px] size-[13px] stroke-white"><path d="M1 2.5h14v11H1zM1 5h14M8 12V7M6 9l2-2 2 2" strokeWidth="1.3" /></Ico>
          <span className="ml-[25px] h-px w-[10px] bg-white" />
        </div>
      </header>

      <nav className="flex h-[28px] items-center bg-[#f4f3f2] pl-[6px] text-[11px] leading-none text-[#444]">
        <div className="flex items-center gap-[19px]">
          {['ファイル', 'ホーム', '挿入', '描画', 'ページ レイアウト', '数式', 'データ', '校閲', '表示', '開発', 'ヘルプ'].map((t) => (
            <button key={t} type="button" className={clsx('whitespace-nowrap pb-[3px]', t === 'ホーム' && 'mt-[2px] border-b-2 border-[#217346] font-bold')}>
              {t}
            </button>
          ))}
        </div>
        <button type="button" className="ml-auto flex h-[19px] w-[59px] items-center justify-center gap-[3px] bg-white font-medium text-[#217346]">
          <Ico className="size-[10px] stroke-[#217346]"><path d="M1 2h14v9H8l-3 4v-4H1z" strokeWidth="1.5" /></Ico>
          コメント
        </button>
      </nav>

      <Ribbon />

      <div className="flex h-[29px] items-center bg-[#f4f3f2] pl-[2px] text-[11px] leading-none text-[#444]">
        <span>自動保存</span>
        <button type="button" role="switch" aria-checked="false" className="ml-[5px] flex h-[13px] w-[31px] items-center gap-[4px] rounded-full border border-[#555] px-[2px] text-[8px]">
          <span className="size-[7px] rounded-full bg-[#444]" />オフ
        </button>
        <IconButton label="上書き保存" className="ml-[10px]"><Ico><path d="M1 1h14v14H1z" fill="#d79be0" stroke="#9a3fae" strokeWidth="1.5" /><path d="M4 1v5h8V1M4 15v-5h8v5" fill="#fff" stroke="#9a3fae" /></Ico></IconButton>
        <IconButton label="元に戻す" className="ml-[10px]"><Ico><path d="M2 2v5h5M2 7c4-6 12-4 11 2-1 3-3 4-5 6" strokeWidth="1.5" /></Ico></IconButton>
        <Chevron className="ml-[4px] size-[6px]" />
        <IconButton label="やり直し" className="ml-[9px]"><Ico className="stroke-[#b4b3b2]"><path d="M14 2v5H9M14 7C10 1 2 3 3 9c1 3 3 4 5 6" strokeWidth="1.5" /></Ico></IconButton>
        <Chevron className="ml-[4px] size-[6px] text-[#b4b3b2]" />
        <IconButton label="タッチ/マウス モードの切り替え" className="ml-[5px]"><Ico className="size-[16px]"><circle cx="7" cy="5" r="4" stroke="#3b7fc4" strokeWidth="1.5" /><path d="M6 11V4.5c0-1.2 2-1.2 2 0V9l4 1v4l-1 1.5H7L3.5 11c1-1 2 0 2.5 1" /></Ico></IconButton>
        <Chevron className="ml-[5px] size-[6px]" />
        <Ico className="ml-[12px] size-[8px]"><path d="M2 2h12M3 7l5 6 5-6z" strokeWidth="2" /></Ico>
      </div>
      <div className="h-[8px] bg-linear-to-b from-[#d2d1d0] to-[#e6e5e4]" />
      <FormulaBar name="" size="sm">
        <textarea aria-label="数式バー" readOnly value="Well" className="size-full resize-none bg-transparent px-[10px] pt-[3px] leading-normal outline-none" />
      </FormulaBar>
      <div className="h-[8px] bg-[#e6e5e4]" />
      <Sheet
        corner={35}
        cols={[['A', 65], ['B', 80], ['C', 102], ['D', 113], ['E', 103], ['F', 161], ['G', 270], ...letters, ['', 24]]}
        rows={toRows([[...fields, 'Starting Quantity (SQ)'], ...sorted.slice(0, 12)], 1)}
        box="h-[275px]"
        table="h-[288px]"
        head="h-[20px]"
        text="text-[12px]"
        pad="pl-[2px] pr-px"
        activeCols={['A', 'B', 'C', 'D', 'E', 'F', 'G']}
        activeHead="bg-[#d3ebdc] text-[#3f7d5c]"
        ranges={[{ from: [0, 0], to: [6, 13], edge: GREEN, thin: true, fill: greyFill, skip: [0, 0] }]}
      />

      <div className="absolute right-[50px] top-[112px] z-20 w-[175px] border border-[#c8c6c4] bg-white py-[2px] text-[10px] leading-none text-[#444] shadow-md">
        {sortMenu.map((m, i) => (
          <button
            key={m.key}
            type="button"
            disabled={m.off}
            className={clsx('flex h-[23px] w-full items-center gap-[8px] whitespace-nowrap pl-[10px]', m.off && 'text-[#b4b3b2]', i === 3 && 'border-t border-[#e1dfdd]')}
          >
            {m.icon}
            <span>{m.label}(<u>{m.key}</u>){m.tail}</span>
          </button>
        ))}
      </div>
      <Arrow className="absolute left-[1058px] top-[124px] z-30" />
    </figure>
  );
}

function FilterButton({ pressed = false, sortedAsc = false }: { pressed?: boolean; sortedAsc?: boolean }) {
  return (
    <button type="button" aria-label="フィルター" className={clsx('absolute bottom-px right-px z-[6] flex size-[28px] items-center justify-center border-2 border-[#b9bcc2]', pressed ? 'bg-[#d5dae3]' : 'bg-[#fbfcfd]')}>
      <svg viewBox="0 0 20 20" className="size-[20px] fill-[#777]" aria-hidden="true">
        {sortedAsc ? (
          <>
            <path d="M2 10h9l-4.5 6z" />
            <path d="M14.5 3v13M12.5 6l2-3 2 3" fill="none" stroke="#777" strokeWidth="1.5" />
          </>
        ) : (
          <path d="M4 8h12l-6 6z" />
        )}
      </svg>
    </button>
  );
}

const filterMenu: { label: string; key: string; height: string; off?: boolean; sub?: boolean; rule?: boolean; icon?: ReactNode }[] = [
  { label: '昇順', key: 'S', height: 'h-[46px]', icon: <SortIcon className="h-[28px] w-[26px]" /> },
  { label: '降順', key: 'O', height: 'h-[46px]', icon: <SortIcon desc className="h-[28px] w-[26px]" /> },
  { label: '色で並べ替え', key: 'T', height: 'h-[44px]', sub: true, rule: true },
  { label: 'シート ビュー', key: 'V', height: 'h-[46px]', off: true, sub: true, rule: true },
  { label: '"Content" からフィルターをクリア', key: 'C', height: 'h-[50px]', off: true, icon: <Ico className="size-[28px] stroke-[#b4b3b2]"><Funnel mark="x" /></Ico> },
  { label: '色フィルター', key: 'I', height: 'h-[40px]', off: true, sub: true },
  { label: 'テキスト フィルター', key: 'F', height: 'h-[42px]', sub: true, rule: true },
];

function FilterMenu() {
  return (
    <div className="absolute left-0 top-[93px] z-20 flex h-[717px] w-[441px] flex-col border-r-2 border-t border-[#d2d0ce] bg-white text-[19px] leading-none text-[#333]">
      {filterMenu.map((m) => (
        <button
          key={m.key}
          type="button"
          disabled={m.off}
          className={clsx('relative flex shrink-0 items-center whitespace-nowrap pb-[3px] pr-[12px]', m.height, m.icon ? 'pl-[13px]' : 'pl-[42px]', m.off && 'text-[#b4b3b2]')}
        >
          {m.icon && <span className="flex w-[43px] shrink-0">{m.icon}</span>}
          <span>{m.label}(<u className="underline-offset-2">{m.key}</u>)</span>
          {m.sub && <Chevron className="ml-auto size-[14px] -rotate-90" />}
          {m.rule && <span className="absolute bottom-0 left-[46px] right-0 h-px bg-[#d8d6d4]" />}
        </button>
      ))}
      <label className="ml-[43px] mr-[11px] mt-[10px] flex h-[34px] shrink-0 items-center border-2 border-[#b0afae] pl-[3px] pr-px">
        <input aria-label="検索" placeholder="検索" className="min-w-0 flex-1 leading-normal outline-none placeholder:text-[#777]" />
        <svg viewBox="0 0 26 26" className="size-[26px] fill-none stroke-[#555]" strokeWidth="1.8" aria-hidden="true"><circle cx="16" cy="10" r="8" /><path d="M10 16L1 24" /></svg>
      </label>
      <div className="ml-[43px] mr-[11px] mt-[7px] flex h-[281px] shrink-0 overflow-hidden border border-[#dcdbda] text-[20px]">
        <ul className="ml-[21px] flex-1">
          {['(すべて選択)', 'Unkn-01', 'Unkn-02', 'Unkn-03', 'Unkn-04', 'Unkn-05', 'Unkn-06', 'Unkn-07', 'Unkn-08', 'Unkn-09'].map((t, i) => (
            <li key={t} className={clsx('h-[30px]', i > 0 && 'border-l border-dotted border-[#777]')}>
              <label className="flex h-full items-center">
                <span className="w-[16px] border-t border-dotted border-[#777]" />
                <span className="grid size-[18px] place-items-center">
                  <input type="checkbox" defaultChecked className="col-start-1 row-start-1 size-[18px] appearance-none border-2 border-[#777] bg-white" />
                  <svg viewBox="0 0 14 14" className="pointer-events-none col-start-1 row-start-1 size-[14px] fill-none stroke-[#222]" strokeWidth="2.6" aria-hidden="true"><path d="M2 7l3.5 3.5L12 3.5" /></svg>
                </span>
                <span className="ml-[7px] whitespace-nowrap">{t}</span>
              </label>
            </li>
          ))}
        </ul>
        <div className="flex w-[27px] flex-col items-center justify-between bg-[#f1f0f0] py-[9px]">
          <Chevron className="size-[14px] rotate-180" />
          <span className="mb-auto mt-[5px] h-[54px] w-full bg-[#cdcccc]" />
          <Chevron className="size-[14px]" />
        </div>
      </div>
      <div className="ml-auto mr-[11px] mt-auto flex gap-[19px]">
        <button type="button" className="h-[38px] w-[122px] border-[3px] border-[#3a78c0] bg-[#e1e0e0]">OK</button>
        <button type="button" className="h-[38px] w-[122px] border-2 border-[#b4b3b2] bg-[#e1e0e0]">キャンセル</button>
      </div>
    </div>
  );
}

function FilterSheet() {
  const head = (text: string, pressed = false): Cell => ({ text, extra: <FilterButton pressed={pressed} /> });
  const rows = toRows(
    [[head('We'), head('Fluor'), head('Target'), head('Content', true), head('Sample'), head('Cq'), head('Starting Quantity (SQ)')], ...sorted, []],
    1,
  );
  return (
    <figure className="relative">
      <Sheet
        corner={39}
        cols={[['A', 72], ['B', 85], ['C', 109], ['D', 121], ['E', 111], ['F', 171], ['G', 288], ['', 7]]}
        rows={rows}
        box="h-[810px]"
        table="h-[849px]"
        head="h-[51px]"
        text="text-[24px]"
        pad="pl-[4px] pr-[4px]"
        activeCols={['G']}
        ranges={[{ from: [6, 6], to: [6, 6], edge: GREEN, handle: 'bg-[#217346]' }]}
      />
      <FilterMenu />
    </figure>
  );
}

function SortedColumn() {
  const ids = ['01', '01', '02', '02', '03', '03', '04', '04', '05', '05', '06', '06', '07', '07', '08'];
  return (
    <figure className="relative mt-[75px] self-start">
      <div className="isolate h-[702px] overflow-hidden">
        <table className="h-[730px] w-full table-fixed border-separate border-spacing-0 border-l border-[#cfcecd] text-[24px] leading-none text-[#333]">
          <thead>
            <tr className="h-[47px]">
              <th scope="col" className="border-b border-r border-[#a8a7a6] bg-[#e6e5e4] p-0 font-normal">D</th>
            </tr>
          </thead>
          <tbody>
            <tr>
              <td className="relative border-b border-r border-[#d6d6d6] py-0 pl-[6px]">
                <div className="whitespace-nowrap leading-normal">Content</div>
                <FilterButton sortedAsc />
              </td>
            </tr>
            {ids.map((id, i) => (
              <tr key={i}>
                <td className="relative border-b border-r border-[#d6d6d6] py-0 pl-[6px] leading-normal">
                  Unkn-{id}
                  {i === 2 && <span className="absolute inset-y-[-2px] right-[-1px] w-[3px] bg-[#217346]" />}
                </td>
              </tr>
            ))}
          </tbody>
        </table>
      </div>
    </figure>
  );
}

function RangeFigure() {
  const rows = toRows(
    [
      [...fields, 'Starting Quantity (SQ)', '平均値1', '2^-Cq'],
      [
        ...sorted[0].slice(0, 6),
        {
          text: 'NaN',
          extra: (
            <span className="absolute right-[22px] top-[2px] flex h-[31px] w-[33px] items-center justify-center border-2 border-[#b9b8b7] bg-white">
              <svg viewBox="0 0 24 24" className="size-[25px]" aria-hidden="true">
                <path d="M12 2L22 22H2z" fill="#fbd28b" stroke="#e8832b" strokeWidth="2" />
                <path d="M12 8v7M12 17.5v2.5" stroke="#333" strokeWidth="2.2" />
              </svg>
            </span>
          ),
        },
        { text: '25.74387', extra: <ErrorFlag /> },
        '1.7796E-08',
      ],
      sorted[1],
      [
        ...sorted[2],
        '',
        '',
        {
          extra: (
            <span className="absolute left-[5px] top-[6px] flex size-[39px] items-center justify-center border-2 border-[#217346] bg-white">
              <svg viewBox="0 0 30 30" className="size-[30px] fill-none stroke-[#555]" strokeWidth="2" aria-hidden="true">
                <path d="M14 4h13v22H12M16 9h7v12h-9v-6h9" />
                <path d="M10 2L3 14h5l-3 9 9-12H9l4-9z" fill="#ee8b2d" stroke="none" />
              </svg>
            </span>
          ),
        },
      ],
      sorted[3],
    ],
    1,
  );
  return (
    <figure className="relative ml-[42px]">
      <div className="h-[18px] bg-linear-to-b from-[#d2d1d0] to-[#e6e5e4]" />
      <FormulaBar name="H2" size="lg">
        <textarea aria-label="数式バー" readOnly value="=AVERAGE(F2:F3)" className="size-full resize-none bg-transparent px-[20px] pt-[3px] leading-normal outline-none" />
      </FormulaBar>
      <div className="h-[17px] bg-[#e6e5e4]" />
      <Sheet
        corner={39}
        cols={[['A', 72], ['B', 85], ['C', 110], ['D', 121], ['E', 112], ['F', 172], ['G', 289], ['H', 121], ['I', 166], ['J', 98, 'pl-[54px] text-left']]}
        rows={rows}
        box="h-[236px]"
        table="h-[246px]"
        head="h-[40px]"
        text="text-[24px]"
        pad="pl-[4px] pr-[3px]"
        activeCols={['H', 'I']}
        activeRows={['2', '3']}
        rowMark
        ranges={[{ from: [7, 1], to: [8, 2], edge: GREEN, fill: greyFill, skip: [7, 1], handle: 'bg-[#217346]' }]}
      />
      <DiagonalArrow className="absolute left-[794px] top-[59px] z-30" />
      <Arrow up className="absolute left-[1188px] top-[345px] z-30" />
      <Note className="absolute left-[772px] top-[3px] z-30">1.範囲選択</Note>
      <Note small className="absolute left-[1028px] top-[599px] z-30">右下をダブルクリック</Note>
    </figure>
  );
}

const ratioCols: Column[] = [['A', 73], ['B', 90], ['C', 113], ['D', 125], ['E', 115], ['F', 178], ['G', 300], ['H', 125], ['I', 172], ['J', 125]];

function RatioFigure() {
  return (
    <figure className="mr-[292px] mt-[338px]">
      <div className="flex h-[15px] items-start overflow-hidden bg-[#f4f3f2] pl-[78px]">
        <span className="-mt-[18px] h-[22px] w-[40px] rounded-full border-2 border-[#555]" />
        <Ico className="-mt-[16px] ml-[20px] size-[22px] stroke-[#9a3fae]"><path d="M1 1h14v14H1zM5 15v-5h6v5" strokeWidth="2" /></Ico>
        <Ico className="-mt-[9px] ml-[20px] size-[16px]"><path d="M13 4c1 4-3 8-6 11" strokeWidth="1.5" /></Ico>
        <Ico className="-mt-[9px] ml-[34px] size-[16px] stroke-[#999]"><path d="M3 4c-1 4 3 8 6 11" strokeWidth="1.5" /></Ico>
        <Ico className="-mt-[9px] ml-[30px] size-[16px]"><path d="M2 4c1 9 3 11 6 11s5-3 5-11" strokeWidth="1.5" /></Ico>
      </div>
      <div className="h-[13px] bg-linear-to-b from-[#d2d1d0] to-[#e6e5e4]" />
      <FormulaBar name="SUM" size="md" muted={false}>
        <div role="textbox" aria-label="数式バー" className="px-[16px] pt-[3px] leading-normal">
          =<span className="text-[#4a6fc0]">I2</span>/<span className="text-[#d0393c]">I20</span>
        </div>
      </FormulaBar>
      <div className="h-[13px] bg-[#e6e5e4]" />
      <Sheet
        corner={41}
        cols={[...ratioCols, ['K', 67, 'text-right']]}
        rows={toRows(
          [
            [...fields, 'Starting Quantity (SQ)', '平均値1', '2^-Cq', { text: 'GR/GAPDH', spill: 1 }],
            [...sorted[0], { text: '25.74387', extra: <ErrorFlag /> }, '1.7796E-08', '=I2/I20'],
            sorted[1],
            [...sorted[2], { text: '26.0446', extra: <ErrorFlag /> }, '1.44476E-08'],
            sorted[3],
          ],
          1,
        )}
        box="h-[172px]"
        table="h-[190px]"
        head="h-[32px]"
        text="text-[18px]"
        pad="pl-[4px] pr-[2px]"
        activeCols={['J']}
        activeRows={['2']}
        rowMark
        ranges={[
          { from: [9, 1], to: [9, 1], edge: GREEN, handle: 'bg-[#217346]' },
          { from: [8, 1], to: [8, 1], edge: 'border-[#4269b8]', fill: 'bg-[#ebf0f8] border-[#d6d6d6]', handle: 'bg-[#4269b8]', corners: true },
        ]}
      />
      <Note className="flex h-[58px] items-center justify-center pl-[88px] font-bold">
        <span className="[text-orientation:sideways] [writing-mode:vertical-rl]">〜</span>
      </Note>
      <div className="mr-[47px]">
        <Sheet
          corner={43}
          cols={ratioCols}
          rows={toRows(
            [
              ['D03', 'SYBR', 'GR', 'Unkn-09', 'D-1000', '28.07409899', 'NaN'],
              ['E01', 'SYBR', 'GR', 'Unkn-19', 'D+0', '26.54249476', 'NaN', '26.51607', '1.042E-08'],
              ['F01', 'SYBR', 'GR', 'Unkn-19', 'D+0', '26.4896501', 'NaN'],
            ],
            19,
          )}
          box="h-[91px]"
          table="h-[92px]"
          text="text-[18px]"
          pad="pl-[4px] pr-[2px]"
          noHead
          ranges={[{ from: [8, 1], to: [8, 1], edge: 'border-[#bf3539]', fill: 'bg-[#fae8e9] border-[#d6d6d6]', handle: 'bg-[#bf3539]', corners: true }]}
        />
      </div>
    </figure>
  );
}

const resultRows = (k: Cell, l: Cell, last: Cell[]): Row[] =>
  toRows(
    [
      [...fields, 'Starting Quantity (SQ)', '平均値1', '2^-Cq', 'GR/GAPD', '平均値2', '標準偏差'],
      [...sorted[0], { text: '25.74387', extra: <ErrorFlag /> }, '1.7796E-08', '1.707876', k, l],
      sorted[1],
      [...sorted[2], { text: '26.0446', extra: <ErrorFlag /> }, '1.44476E-08', '0.877072'],
      sorted[3],
      [...sorted[4], { text: '26.18565', extra: <ErrorFlag /> }, '1.31019E-08', '0.812782'],
      sorted[5],
      last,
    ],
    1,
  );

const blueFill = 'bg-[#ebf0f8] border-[#d6d6d6]';

function AverageFigure() {
  return (
    <figure className="relative mr-[216px] mt-[215px]">
      <Sheet
        corner={22}
        cols={[['A', 48], ['B', 60], ['C', 76], ['D', 84], ['E', 77], ['F', 118], ['G', 201], ['H', 83], ['I', 114], ['J', 84], ['K', 84], ['L', 83], ['M', 49, 'text-right']]}
        rows={resultRows(
          {
            text: (
              <>
                =AVERAGE(<span className="border-r border-[#333] text-[#5f7fc9]">J2:J7</span>
              </>
            ),
            spill: 2,
          },
          '',
          ['', '', '', '', '', '', '', { extra: <ErrorFlag /> }],
        )}
        box="h-[244px]"
        table="h-[266px]"
        head="h-[33px]"
        text="text-[17px]"
        pad="pl-[3px] pr-[3px]"
        activeCols={['K']}
        activeRows={['2']}
        rowHead="text-left"
        rowMark
        ranges={[
          { from: [10, 1], to: [10, 1], edge: 'border-x-0 border-[#217346]', handle: 'bg-[#217346]' },
          { from: [9, 1], to: [9, 6], edge: 'border-[#4269b8]', fill: blueFill, handle: 'bg-[#4269b8]', corners: true },
          { from: [9, 1], to: [9, 6], edge: '-inset-px border-white', thin: true },
          { from: [9, 1], to: [9, 6], edge: '-inset-px border-dashed border-[#217346]' },
        ]}
      />
      <div className="absolute right-0 top-[93px] z-20 flex h-[22px] w-[201px] items-center whitespace-nowrap border border-r-0 border-[#c4c3c2] bg-white pl-[5px] text-[15px] leading-none text-[#666] shadow-sm">
        AVERAGE(<b>数値1</b>, [数値2], ...)
      </div>
    </figure>
  );
}

function DeviationFigure() {
  return (
    <figure className="mr-[216px] mt-[28px]">
      <Sheet
        corner={28}
        cols={[['A', 48], ['B', 57], ['C', 74], ['D', 82], ['E', 74], ['F', 116], ['G', 195], ['H', 82], ['I', 111], ['J', 82], ['K', 81], ['L', 82], ['M', 71, 'pl-[35px] text-left']]}
        rows={resultRows(
          '1.132576',
          { text: <>=STDEV.S(<span className="text-[#5f7fc9]">J2:J7</span>)</>, spill: 1 },
          ['A04', 'SYBR', 'GR', 'Unkn-04', 'D-250', '27.0738642', 'NaN', { text: '27.0403', extra: <ErrorFlag /> }, '7.24526E-09', '1.178188'],
        )}
        box="h-[236px]"
        table="h-[254px]"
        head="h-[27px]"
        text="text-[17px]"
        pad="pl-[3px] pr-[2px]"
        activeCols={['L']}
        activeRows={['2']}
        rowMark
        ranges={[
          { from: [11, 1], to: [11, 1], edge: 'border-r-0 border-[#217346]', handle: 'bg-[#217346]' },
          { from: [9, 1], to: [9, 6], edge: 'border-[#4269b8]', fill: blueFill, handle: 'bg-[#4269b8]', corners: true },
        ]}
      />
    </figure>
  );
}

export default function App() {
  return (
    <main
      lang="ja"
      className="grid min-h-screen grid-cols-2 items-start overflow-x-hidden bg-white font-['Noto_Sans_CJK_JP','Liberation_Sans',sans-serif] [font-feature-settings:'palt']"
    >
      <section className="px-[267px] pt-[274px]">
        <div className="ml-[14px] mr-[29px] grid grid-cols-[552fr_308fr_611fr]">
          <SourceSheet />
          <div className="flex flex-col pl-[42px] pt-[190px]">
            <Note small className="pl-[30px]">コピー</Note>
            <Arrow />
          </div>
          <PastedSheet />
        </div>
        <ExcelWindow />
        <div className="relative ml-[55px] mr-[121px] mt-[144px] grid grid-cols-[1003fr_207fr_128fr]">
          <FilterSheet />
          <div />
          <SortedColumn />
          <DiagonalArrow left className="absolute left-[97px] top-[-124px] z-30" />
          <DiagonalArrow left className="absolute left-[157px] top-[-48px] z-30" />
          <Note className="absolute left-[297px] top-[-153px]">1.</Note>
          <Note className="absolute left-[335px] top-[-86px]">2.</Note>
          <Arrow className="absolute left-[880px] top-[353px] z-30" />
        </div>
      </section>
      <section className="pl-[270px] pr-[379px] pt-[310px]">
        <RangeFigure />
        <RatioFigure />
        <AverageFigure />
        <DeviationFigure />
      </section>
    </main>
  );
}
